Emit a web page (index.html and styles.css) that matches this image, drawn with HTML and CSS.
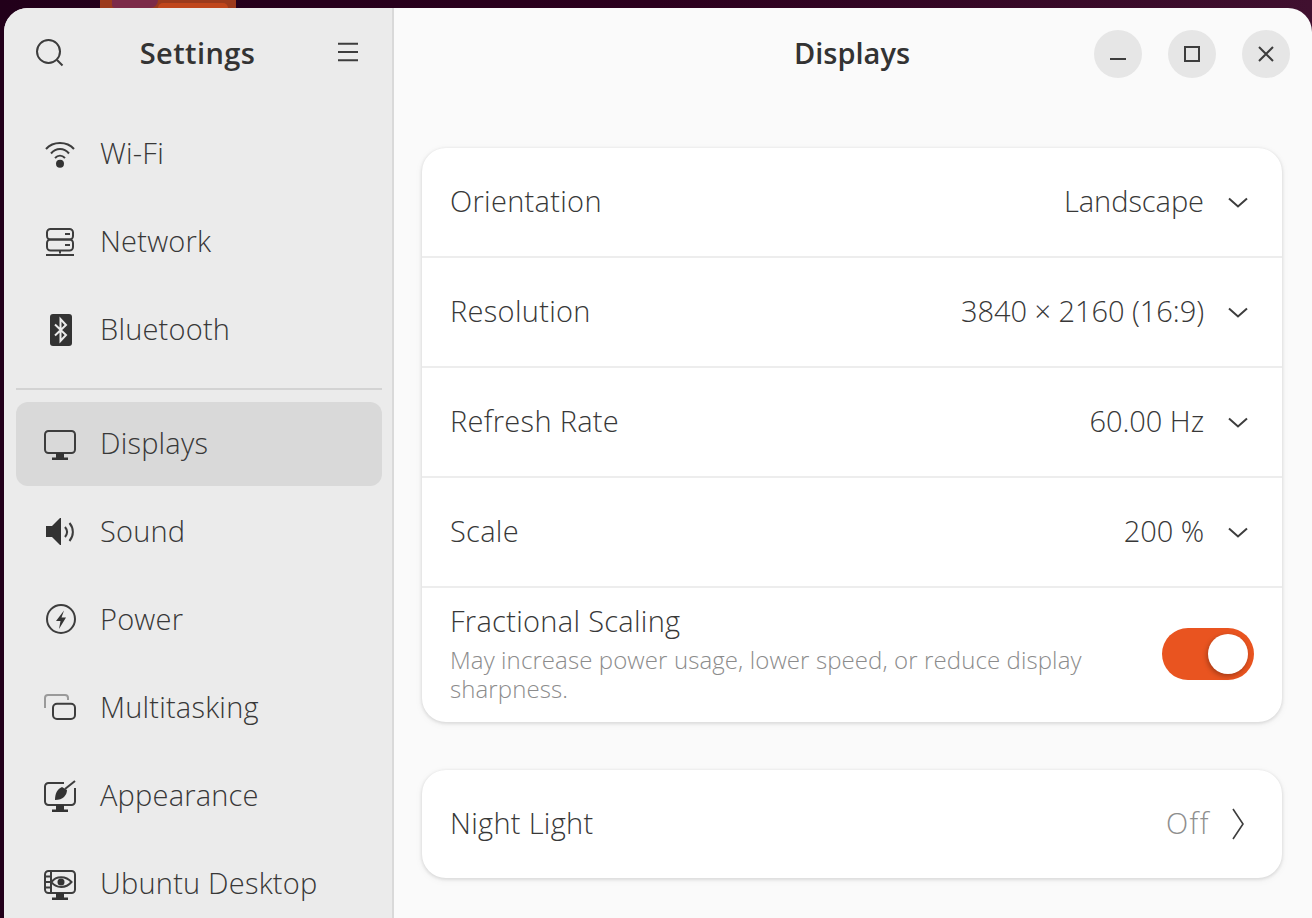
FILE: index.html
```html
<!DOCTYPE html>
<html lang="en">
<head>
<meta charset="utf-8">
<title>Displays</title>
<link rel="stylesheet" href="styles.css">
</head>
<body>
<div class="wallpaper"><div class="wp-a"></div><div class="wp-b"></div></div>
<div class="window">
  <aside class="sidebar">
    <header class="side-head">
      <svg class="hicon" viewBox="0 0 28 28"><circle cx="12.500" cy="12.500" r="11.500" class="st"/><path d="M21 21l5.500 5.500" class="st"/></svg>
      <h1 class="side-title">Settings</h1>
      <svg class="hicon" viewBox="0 0 28 28"><path d="M4 4.700h20M4 13h20M4 21.300h20" class="st"/></svg>
    </header>
    <nav class="nav">
      <a class="item"><svg class="icon" viewBox="0 0 32 32"><path class="st" d="M2 12C9 4 23 4 30 12M7 16.500C12 10.500 20 10.500 25 16.500M11 21C14 18 18 18 21 21"/><circle class="fi" cx="16" cy="26.700" r="4"/></svg><span>Wi-Fi</span></a>
      <a class="item"><svg class="icon" viewBox="0 0 32 32"><rect class="st" x="3" y="4" width="26" height="10.500" rx="3.500"/><rect class="st" x="3" y="14.500" width="26" height="11" rx="3.500"/><path class="st" d="M21 9h5M21 20h5M16 25.500v3M2 30h28"/></svg><span>Network</span></a>
      <a class="item"><svg class="icon" viewBox="0 0 32 32"><rect class="fi" x="6" y="1" width="22" height="32" rx="3"/><path d="M11 11.500 22 22l-5.500 6V6L22 12 11 22.500" fill="none" stroke="#ebebeb" stroke-width="2"/></svg><span>Bluetooth</span></a>
      <div class="sep"></div>
      <a class="item active"><svg class="icon" viewBox="0 0 32 32"><rect class="st" x="1" y="3" width="30" height="22" rx="3.500"/><path class="fi" d="M12 25h8v4.500h4V32H8v-2.500h4z"/></svg><span>Displays</span></a>
      <a class="item"><svg class="icon" viewBox="0 0 32 32"><path class="fi" d="M2 10h6l8-8h1v27h-1l-8-8H2z"/><path class="st" d="M21 11c2.500 3 2.500 7 0 10M25.500 7c4.500 5.500 4.500 12.500 0 18"/></svg><span>Sound</span></a>
      <a class="item"><svg class="icon" viewBox="0 0 32 32"><circle class="st" cx="17" cy="15" r="14"/><path class="fi" d="M20 6.600 12 17h4.500L15 25 22 13.500h-4.500z"/></svg><span>Power</span></a>
      <a class="item"><svg class="icon" viewBox="0 0 32 32"><path d="M1 16V6a3 3 0 0 1 3-3H21a3 3 0 0 1 3 3v2" fill="none" stroke="#9a9a9a" stroke-width="2"/><rect class="st" x="9" y="11.700" width="22" height="15.300" rx="4"/></svg><span>Multitasking</span></a>
      <a class="item"><svg class="icon" viewBox="0 0 32 32"><path class="st" d="M20 3H4.500A3.500 3.500 0 0 0 1 6.500v15A3.500 3.500 0 0 0 4.500 25h23a3.500 3.500 0 0 0 3.500-3.500V8"/><path class="fi" d="M12 25h8v4.500h4V32H8v-2.500h4z"/><path class="fi" d="M11 20c0-6 2-11 7-13l5 3c0 5-4 10-12 10z"/><path class="st" d="m21 9 10-8"/></svg><span>Appearance</span></a>
      <a class="item"><svg class="icon" viewBox="0 0 32 32"><rect class="st" x="1" y="3" width="30" height="22" rx="3.500"/><path class="st" d="M7 3v22M1 8.500h6M1 14h6M1 19.500h6M7.500 14C12 7.500 22 7.500 27.500 14 22 20.500 12 20.500 7.500 14z"/><circle class="fi" cx="17" cy="14" r="3.500"/><path class="fi" d="M12 25h8v4.500h4V32H8v-2.500h4z"/></svg><span>Ubuntu Desktop</span></a>
    </nav>
  </aside>
  <main class="content">
    <header class="main-head">
      <h2 class="main-title">Displays</h2>
      <div class="controls">
        <button class="wbtn"><svg viewBox="0 0 20 20" class="wicon"><path class="st" d="M2 15h16"/></svg></button>
        <button class="wbtn"><svg viewBox="0 0 20 20" class="wicon"><rect class="st" x="3" y="3" width="14" height="14"/></svg></button>
        <button class="wbtn"><svg viewBox="0 0 20 20" class="wicon"><path class="st" d="m3 3 14 14M17 3 3 17"/></svg></button>
      </div>
    </header>
    <section class="card first">
      <div class="row"><span class="label">Orientation</span><span class="value">Landscape</span><svg class="chev" viewBox="0 0 20 12"><path class="st" d="m1 1.500 9 8 9-8"/></svg></div>
      <div class="row"><span class="label">Resolution</span><span class="value">3840 × 2160 (16:9)</span><svg class="chev" viewBox="0 0 20 12"><path class="st" d="m1 1.500 9 8 9-8"/></svg></div>
      <div class="row"><span class="label">Refresh Rate</span><span class="value">60.00 Hz</span><svg class="chev" viewBox="0 0 20 12"><path class="st" d="m1 1.500 9 8 9-8"/></svg></div>
      <div class="row"><span class="label">Scale</span><span class="value">200 %</span><svg class="chev" viewBox="0 0 20 12"><path class="st" d="m1 1.500 9 8 9-8"/></svg></div>
      <div class="row tall">
        <div class="stack"><span class="label">Fractional Scaling</span><span class="sub">May increase power usage, lower speed, or reduce display sharpness.</span></div>
        <div class="switch"><div class="knob"></div></div>
      </div>
    </section>
    <section class="card second">
      <div class="row night"><span class="label">Night Light</span><span class="value dim">Off</span><svg class="chev-r" viewBox="0 0 12 32"><path class="thin" d="m1 1 10 15L1 31"/></svg></div>
    </section>
  </main>
</div>
</body>
</html>
```

FILE: styles.css
```css
* { box-sizing: border-box; }
html, body { margin: 0; height: 100%; overflow: hidden; }
body {
  background: linear-gradient(90deg, #22001a, #2c001e 50%, #40102f);
  padding: 8px 0 0 4px;
  font-family: "Open Sans", "Noto Sans", "Liberation Sans", sans-serif;
  font-weight: 300;
  color: #383838;
  position: relative;
}
.wallpaper { position: absolute; left: 100px; top: 0; width: 136px; height: 8px; background: #9c3a1c; overflow: hidden; }
.wp-a { position: absolute; left: 12px; top: 0; width: 46px; height: 8px; background: #7c2a48; border-radius: 0 0 20px 8px; }
.wp-b { position: absolute; left: 58px; top: 3px; width: 70px; height: 5px; background: #c0461c; border-radius: 6px 6px 0 0; }
.window { display: flex; width: 1308px; height: 910px; border-radius: 24px 24px 0 0; overflow: hidden; background: #fafafa; }
.st { fill: none; stroke: #3d3d3d; stroke-width: 2; }
.thin { fill: none; stroke: #3d3d3d; stroke-width: 1.600; }
.fi { fill: #333; }
.sidebar { width: 390px; flex: none; background: #ebebeb; border-right: 2px solid #d9d9d9; padding: 0 10px 0 12px; }
.side-head { height: 92px; margin: 0 -12px 11px; padding: 0 32px; display: flex; align-items: center; justify-content: space-between; }
.hicon { width: 28px; height: 28px; flex: none; margin-bottom: 2px; }
.side-title { margin: 0 3px 4px 0; font-size: 29px; font-weight: 600; color: #333; letter-spacing: .4px; }
.nav { display: flex; flex-direction: column; gap: 4px; }
.item { height: 84px; padding-left: 28px; display: flex; align-items: center; gap: 24px; border-radius: 12px; font-size: 29px; letter-spacing: .2px; }
.item span { padding-bottom: 2px; }
.sep ~ .item span { padding-bottom: 4px; }
.item.active { background: #d9d9d9; }
.icon { width: 32px; height: 32px; flex: none; overflow: visible; }
.sep { height: 2px; background: #d3d3d3; margin: 13px 0 8px; }
.content { flex: 1; min-width: 0; padding: 0 30px 0 28px; }
.main-head { height: 92px; margin-bottom: 48px; padding-bottom: 4px; display: flex; align-items: center; justify-content: center; position: relative; }
.main-title { margin: 0; font-size: 29px; font-weight: 600; color: #333; }
.controls { position: absolute; right: -8px; top: 22px; display: flex; gap: 26px; }
.wbtn { width: 48px; height: 48px; border: 0; padding: 0; border-radius: 50%; background: #e6e6e6; display: flex; align-items: center; justify-content: center; }
.wicon { width: 20px; height: 20px; }
.card { background: #fff; border-radius: 24px; box-shadow: 0 1px 3px 1px rgba(0,0,0,.09), 0 2px 8px rgba(0,0,0,.05); }
.first { margin-bottom: 48px; }
.row { height: 110px; padding: 0 34px 0 28px; display: flex; align-items: center; border-bottom: 2px solid #ededed; font-size: 29px; letter-spacing: .3px; }
.row.tall { height: 134px; border-bottom: 0; padding-right: 28px; padding-bottom: 7px; justify-content: space-between; }
.row.night { height: 108px; border-bottom: 0; }
.label { margin-right: auto; padding-bottom: 4px; }
.value { margin-right: 24px; padding-bottom: 4px; letter-spacing: -.05px; }
.value.dim { color: #8e8e8e; margin-right: 22px; letter-spacing: 1.5px; }
.chev { width: 20px; height: 12px; margin-top: 2px; }
.chev-r { width: 12px; height: 32px; margin-right: 4px; }
.stack { display: flex; flex-direction: column; width: 650px; }
.sub { font-size: 24px; line-height: 29px; color: #8c8c8c; margin-top: 1px; letter-spacing: .1px; }
.switch { width: 92px; height: 52px; border-radius: 26px; background: #e95420; display: flex; align-items: center; justify-content: flex-end; padding-right: 6px; margin-top: 5px; flex: none; }
.knob { width: 40px; height: 40px; border-radius: 50%; background: #fff; box-shadow: -1px 2px 5px rgba(0,0,0,.3); }
```
